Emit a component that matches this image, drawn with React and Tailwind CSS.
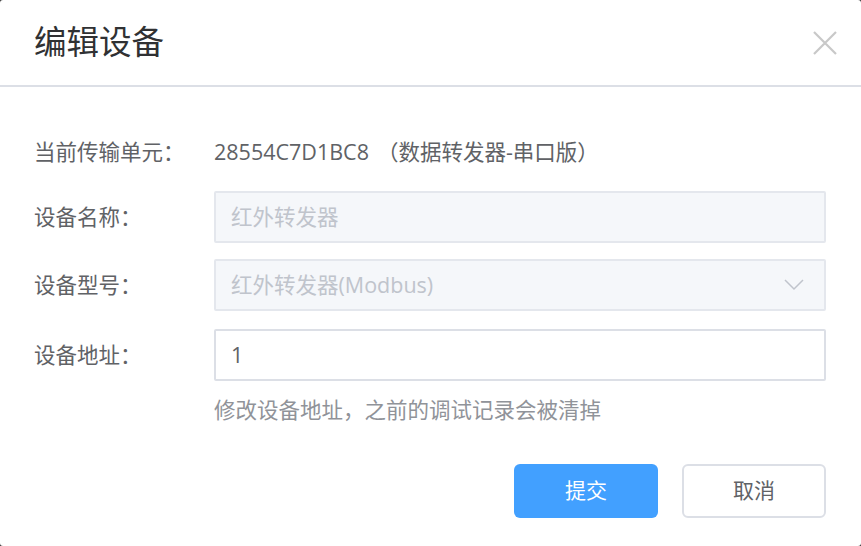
import React from 'react';

const font = { fontFamily: '"Open Sans", "Noto Sans CJK SC", sans-serif' };

function Row({ label, children }) {
    return (
        <div className="flex items-center">
            <div className="w-[180px] shrink-0 text-[21.5px] text-[#606266]">{label}</div>
            <div className="flex-1">{children}</div>
        </div>
    );
}

export default function App() {
    return (
        <div className="w-[861px] h-[546px] bg-[#3a3a3a]" style={font}>
            <div className="w-full h-full bg-white rounded-[3px] flex flex-col">
                {/* header */}
                <div className="h-[87px] shrink-0 flex items-center justify-between pl-[34px] pr-[23px] border-b-2 border-[#dcdfe6]">
                    <h1 className="text-[32.5px] text-[#303133] leading-none">编辑设备</h1>
                    <svg width="26" height="26" viewBox="0 0 26 26" className="text-[#c8c8c8]">
                        <path d="M2 2 L24 24 M24 2 L2 24" stroke="currentColor" strokeWidth="2.2" fill="none" />
                    </svg>
                </div>

                {/* body */}
                <div className="pl-[34px] pr-[35px] pt-[39px] flex flex-col">
                    <Row label="当前传输单元：">
                        <div className="h-[52px] flex items-center text-[21.5px] text-[#606266]">
                            <span>28554C7D1BC8</span>
                            <span className="ml-[8px]">（数据转发器-串口版）</span>
                        </div>
                    </Row>
                    <div className="h-[13px]" />
                    <Row label="设备名称：">
                        <div className="h-[52px] border-2 border-[#e4e7ed] bg-[#f5f7fa] rounded-[2px] flex items-center px-[15px] text-[21.5px] text-[#c0c4cc]">红外转发器</div>
                    </Row>
                    <div className="h-[16px]" />
                    <Row label="设备型号：">
                        <div className="h-[52px] border-2 border-[#e4e7ed] bg-[#f5f7fa] rounded-[2px] flex items-center justify-between pl-[15px] pr-[20px] text-[21.5px] text-[#c0c4cc]">
                            <span>红外转发器(Modbus)</span>
                            <svg width="20" height="12" viewBox="0 0 20 12" className="text-[#c0c4cc]">
                                <path d="M1 1 L10 10 L19 1" stroke="currentColor" strokeWidth="1.5" fill="none" />
                            </svg>
                        </div>
                    </Row>
                    <div className="h-[18px]" />
                    <Row label="设备地址：">
                        <div className="h-[52px] border-2 border-[#dcdfe6] bg-white rounded-[2px] flex items-center px-[15px] text-[21.5px] text-[#606266]">1</div>
                    </Row>
                    <div className="pl-[180px] mt-[14px] text-[21.5px] leading-[30px] text-[#909399]">修改设备地址，之前的调试记录会被清掉</div>

                    <div className="flex justify-end gap-[24px] mt-[39px]">
                        <button className="w-[144px] h-[54px] rounded-[6px] bg-[#42a0ff] text-white text-[21px]">提交</button>
                        <button className="w-[144px] h-[54px] rounded-[6px] border-2 border-[#dcdfe6] bg-white text-[#606266] text-[21px]">取消</button>
                    </div>
                </div>
            </div>
        </div>
    );
}
